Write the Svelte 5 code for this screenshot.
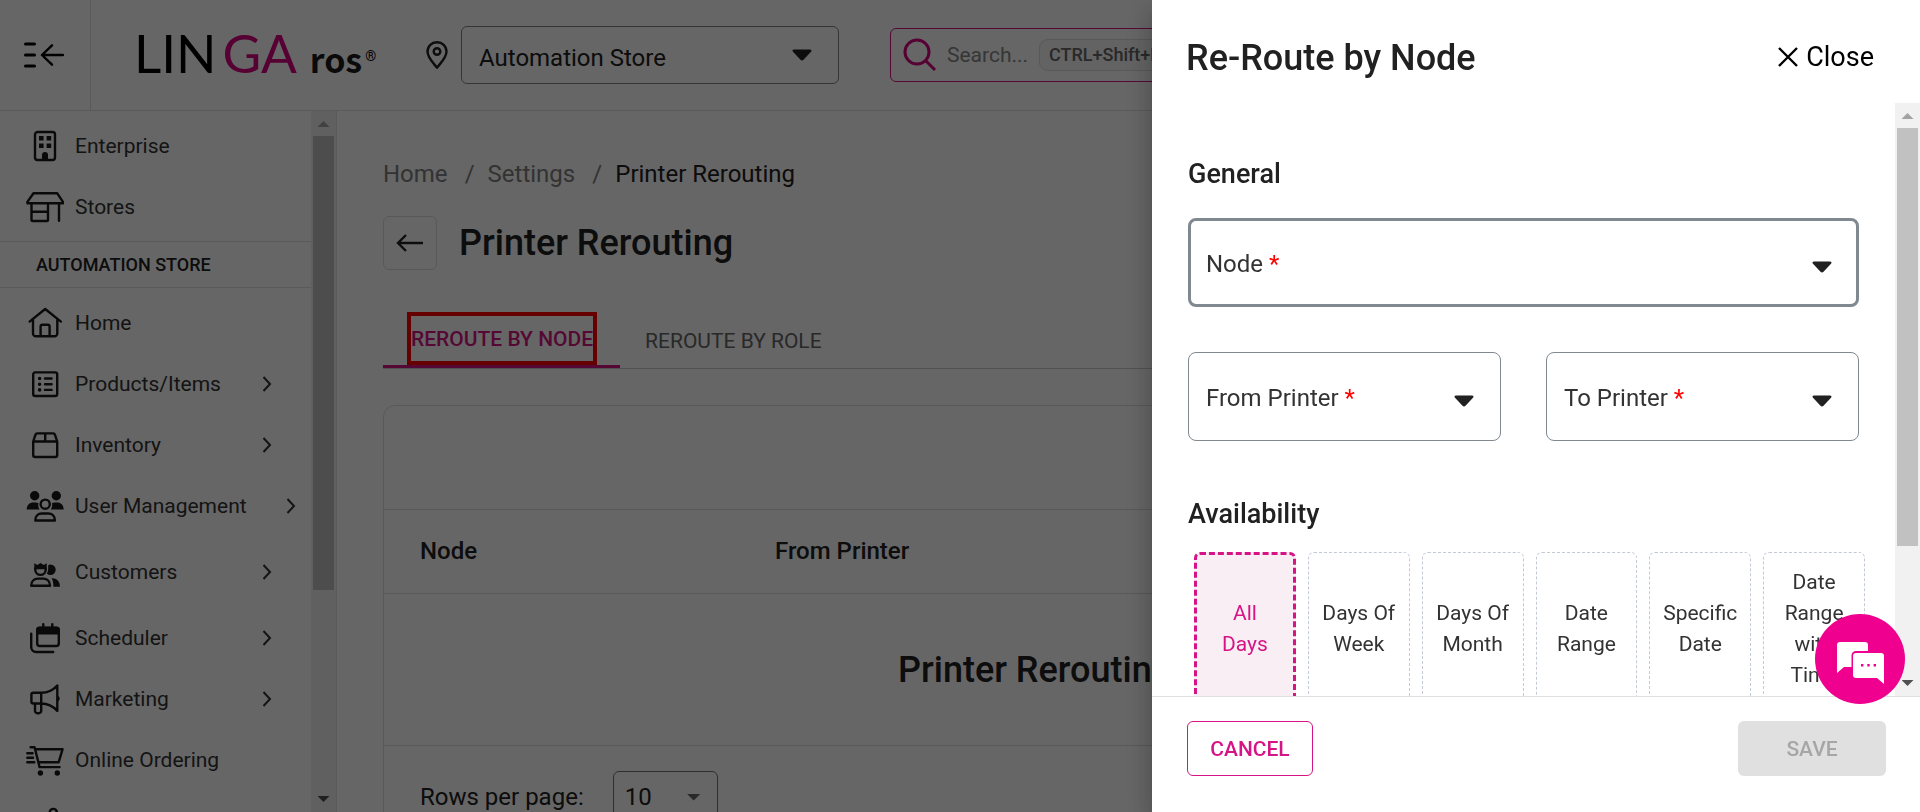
<script>
  const topItems = [
    { icon: 'enterprise', label: 'Enterprise' },
    { icon: 'stores', label: 'Stores' }
  ];
  const storeItems = [
    { icon: 'home', label: 'Home' },
    { icon: 'products', label: 'Products/Items', more: true },
    { icon: 'inventory', label: 'Inventory', more: true },
    { icon: 'users', label: 'User Management', more: true },
    { icon: 'customers', label: 'Customers', more: true, tall: true },
    { icon: 'scheduler', label: 'Scheduler', more: true },
    { icon: 'marketing', label: 'Marketing', more: true },
    { icon: 'ordering', label: 'Online Ordering' },
    { icon: 'share', label: '' }
  ];
  const choices = ['All\nDays', 'Days Of\nWeek', 'Days Of\nMonth', 'Date\nRange', 'Specific\nDate', 'Date\nRange\nwith\nTime'];
  let chosen = $state(0);
</script>

{#snippet icon(name)}
  <svg class="nav-icon" viewBox="0 0 38 32" aria-hidden="true">
    {#if name === 'enterprise'}
      <rect x="9" y="2" width="20" height="28" rx="2.5" />
      <path class="solid" d="M13 6h4.6v4.4H13zM20.6 6h4.6v4.4h-4.6zM13 13.6h4.6V18H13zM20.6 13.6h4.6V18h-4.6zM16 30v-5a3 3 0 0 1 6 0v5z" />
    {:else if name === 'stores'}
      <path d="M7.5 2.3h23.8l5.6 8.6v1.4H1.4v-1.4zM5.5 12.3V29a1 1 0 0 0 1 1H21a1 1 0 0 0 1-1V12.3M5.5 20.7H22M33 12.3v17.5" />
    {:else if name === 'home'}
      <path d="M3.6 14.6 19.2 2l15.7 12.6M7 12.5v14a2.8 2.8 0 0 0 2.8 2.8h18.7a2.8 2.8 0 0 0 2.8-2.8v-14M14.6 29V19.5a1.8 1.8 0 0 1 1.8-1.8h5.4a1.8 1.8 0 0 1 1.8 1.8V29" />
    {:else if name === 'products'}
      <rect x="7.2" y="4.4" width="24" height="23.6" rx="2" />
      <path d="M19 10.5h6.6M19 16.2h6.6M19 21.9h6.6" />
      <path class="solid" d="M15.4 10.5a1.8 1.8 0 1 1-3.6 0 1.8 1.8 0 0 1 3.6 0M15.4 16.2a1.8 1.8 0 1 1-3.6 0 1.8 1.8 0 0 1 3.6 0M15.4 21.9a1.8 1.8 0 1 1-3.6 0 1.8 1.8 0 0 1 3.6 0" />
    {:else if name === 'inventory'}
      <path d="M7.2 12.5 9.4 5.8a2 2 0 0 1 1.9-1.4h15.8A2 2 0 0 1 29 5.8l2.2 6.7V26a2 2 0 0 1-2 2h-20a2 2 0 0 1-2-2zM7.2 12.5h24M19.2 4.4v8" />
    {:else if name === 'users'}
      <circle class="solid" cx="8.7" cy="5.8" r="4.7" />
      <circle class="solid" cx="30.3" cy="5.8" r="4.7" />
      <path class="solid" d="M.7 19.4c0-4.5 3-7 6.6-7h2.4c1 0 1.9.2 2.7.6-.5 2.3 0 4.6 1.200 6.400zM37.700 19.400c0-4.500-3-7-6.600-7h-2.400c-1 0-1.900.200-2.700.600.5 2.300 0 4.600-1.200 6.400z" />
      <circle cx="19.2" cy="14.2" r="4.6" />
      <path d="M9.3 30.5c0-4.2 2.8-7 6.5-7h6.6c3.7 0 6.5 2.8 6.5 7z" />
    {:else if name === 'customers'}
      <circle class="solid" cx="24.5" cy="13.7" r="5.2" />
      <path class="solid" d="M25.5 22.2c4.8-.5 8.5 3 8.5 8.5h-6.6c0-3.6-.4-6.2-1.9-8.5z" />
      <path class="gap" d="M8.3 7.3l3 1.7 3.2-1.9L17.7 9l3-1.7v6a6.2 6.2 0 0 1-12.4 0z" />
      <path class="solid" d="M8.3 7.3l3 1.7 3.2-1.9L17.7 9l3-1.7v6H8.3z" />
      <path d="M9.3 12.5v1.2a5.2 5.2 0 0 0 10.4 0v-1.2" />
      <path d="M5.2 29.8c0-4.3 2.9-7.2 6.7-7.2h5.4c3.8 0 6.7 2.9 6.7 7.2z" />
    {:else if name === 'scheduler'}
      <rect x="11.2" y="5.8" width="21.6" height="18.2" rx="2.5" />
      <path class="solid" d="M10.3 12.5V7.6a2.8 2.8 0 0 1 2.8-2.8h17.8a2.8 2.8 0 0 1 2.8 2.8v4.9z" />
      <path d="M17.3 2.3v3M26.3 2.3v3M5.2 11.6V25a5 5 0 0 0 5 5h17" />
    {:else if name === 'marketing'}
      <path d="M15.2 9.8H7.4a2 2 0 0 0-2 2v6.7a2 2 0 0 0 2 2h7.800zM15.200 9.800c6 0 12-2.800 16.100-7.300v25.400c-4.100-4.500-10.100-7.400-16.100-7.400M9 20.500v7.400a2.300 2.300 0 0 0 2.300 2.300h1.600a2.300 2.300 0 0 0 2.300-2.300v-7.400" />
      <path class="solid" d="M31.5 12.7a3 3 0 0 1 0 5.8z" />
    {:else if name === 'ordering'}
      <path d="M4.6 3.3h4l5 19.8h20M9.7 5.2h26.9l-3.9 13H12.4M1.3 9.3h5.3M1.3 13.7H7M1.3 18.2h7" />
      <circle class="solid" cx="14.4" cy="29" r="2.7" />
      <circle class="solid" cx="31.3" cy="29" r="2.7" />
    {:else}
      <circle cx="27.3" cy="7.5" r="3.6" />
      <path d="M24 9.5 14 15" />
    {/if}
  </svg>
{/snippet}

{#snippet row(item)}
  <a class="nav-row" class:tall={item.tall} href="#menu" aria-label={item.label || 'More'}>
    {@render icon(item.icon)}
    <span class="nav-label">{item.label}</span>
    {#if item.more}
      <svg class="chevron" viewBox="0 0 10 16" aria-hidden="true"><path d="M1.5 1l6.500 7-6.500 7" /></svg>
    {/if}
  </a>
{/snippet}

{#snippet field(id, label, focused)}
  <div class="field" class:focused>
    <label for={id}>{label} <span class="required">*</span></label>
    <select {id} required><option value=""></option></select>
    <svg class="caret" viewBox="0 0 20 12" aria-hidden="true"><path d="M2 .5h16c1.500 0 2 1.300 1 2.300l-7.500 8c-.8.900-2.200.900-3 0L1 2.800C0 1.800.5.500 2 .500z" /></svg>
  </div>
{/snippet}

<div class="app">
  <header class="topbar">
    <button class="toggle" aria-label="Collapse menu">
      <svg viewBox="0 0 40 28" aria-hidden="true">
        <path class="bars" d="M1.5 3h9M1.5 14h9M1.5 25h9" />
        <path d="M39 14H18M28 4.3 18 14l10 9.7" />
      </svg>
    </button>
    <div class="logo">
      <span class="lin">LIN</span><span class="ga">GA</span><span class="ros">ros</span><sup>®</sup>
    </div>
    <svg class="pin" viewBox="0 0 22 28" aria-hidden="true">
      <path d="M11 1.2a9.4 9.4 0 0 0-9.5 9.4C1.5 17 7.5 22 11 26.6 14.5 22 20.5 17 20.5 10.6A9.4 9.4 0 0 0 11 1.2z" />
      <circle cx="11" cy="10.5" r="3.3" />
    </svg>
    <div class="store">
      <select aria-label="Store"><option>Automation Store</option></select>
      <svg class="caret" viewBox="0 0 20 12" aria-hidden="true"><path d="M2 .5h16c1.500 0 2 1.300 1 2.300l-7.500 8c-.8.900-2.200.900-3 0L1 2.800C0 1.800.5.500 2 .500z" /></svg>
    </div>
    <div class="search">
      <svg viewBox="0 0 34 34" aria-hidden="true"><circle cx="14" cy="14" r="12" /><path d="M22.5 22.5 32 32" /></svg>
      <input type="text" aria-label="Search" placeholder="Search..." />
      <kbd>CTRL+Shift+F</kbd>
    </div>
  </header>

  <div class="columns">
    <aside>
      <nav>
        {#each topItems as item}{@render row(item)}{/each}
        <h2 class="section">AUTOMATION STORE</h2>
        {#each storeItems as item}{@render row(item)}{/each}
      </nav>
      <div class="scrollbar" aria-hidden="true">
        <span class="arrow up"></span>
        <span class="thumb"></span>
        <span class="arrow down"></span>
      </div>
    </aside>

    <main>
      <div class="crumbs">
        <a href="#home">Home</a><span>/</span><a href="#settings">Settings</a><span>/</span><strong>Printer Rerouting</strong>
      </div>
      <div class="heading">
        <button class="back" aria-label="Back">
          <svg viewBox="0 0 28 18" aria-hidden="true"><path d="M27 9H2.5M10 1 2 9l8 8" /></svg>
        </button>
        <h1>Printer Rerouting</h1>
      </div>
      <div class="tabs" role="tablist">
        <button class="tab active" role="tab" aria-selected="true"><span>REROUTE BY NODE</span></button>
        <button class="tab" role="tab" aria-selected="false">REROUTE BY ROLE</button>
      </div>
      <section class="panel">
        <div class="toolbar"></div>
        <table>
          <colgroup><col class="node-col" /><col /></colgroup>
          <thead><tr><th>Node</th><th>From Printer</th></tr></thead>
          <tbody><tr><td colspan="2">Printer Rerouting</td></tr></tbody>
        </table>
        <div class="pager">
          <label for="rows">Rows per page:</label>
          <div class="rows">
            <select id="rows"><option>10</option></select>
            <span class="small-caret"></span>
          </div>
        </div>
      </section>
    </main>
  </div>
</div>

<div class="backdrop"></div>

<div class="drawer" role="dialog" aria-label="Re-Route by Node">
  <div class="drawer-head">
    <h2>Re-Route by Node</h2>
    <button class="close">
      <svg viewBox="0 0 20 20" aria-hidden="true"><path d="M1 1l18 18M19 1 1 19" /></svg>Close
    </button>
  </div>
  <div class="drawer-body">
    <form class="content">
      <h3>General</h3>
      <div class="fields">
        {@render field('node', 'Node', true)}
        {@render field('from', 'From Printer', false)}
        {@render field('to', 'To Printer', false)}
      </div>
      <h3 class="later">Availability</h3>
      <div class="choices">
        {#each choices as choice, i}
          <button type="button" class:chosen={chosen === i} aria-pressed={chosen === i} onclick={() => (chosen = i)}>{choice}</button>
        {/each}
      </div>
    </form>
    <div class="scrollbar" aria-hidden="true">
      <span class="arrow up"></span>
      <span class="thumb"></span>
      <span class="arrow down"></span>
    </div>
  </div>
  <div class="drawer-foot">
    <button class="cancel">CANCEL</button>
    <button class="save" disabled>SAVE</button>
  </div>
</div>

<button class="chat" aria-label="Chat">
  <svg viewBox="0 0 48 42" aria-hidden="true">
    <path class="bubble" d="M3 0h25a3 3 0 0 1 3 3v6H19a4.5 4.5 0 0 0-4.5 4.5V25H7l-7 6V3a3 3 0 0 1 3-3z" />
    <path class="bubble" d="M19 11h25a3 3 0 0 1 3 3v28l-7-6H19a3 3 0 0 1-3-3V14a3 3 0 0 1 3-3z" />
    <path class="dots" d="M24 22h2.4v2.4H24zM30.3 22h2.4v2.4h-2.400zM36.600 22H39v2.400h-2.400z" />
  </svg>
</button>

<style>
  :global(body) {
    overflow: hidden;
    background: #fff;
    color: #212121;
    font-family: Roboto, sans-serif;
    font-size: 21px;
  }
  * { box-sizing: border-box; }
  button, input, select { margin: 0; padding: 0; border: 0; background: none; color: inherit; font: inherit; }
  select { appearance: none; outline: none; }
  h1, h2, h3 { margin: 0; font-weight: 500; }
  a { color: inherit; text-decoration: none; }
  svg { flex: none; fill: none; stroke: currentColor; }

  .app { display: flex; flex-direction: column; height: 100vh; overflow: hidden; }
  .topbar { display: flex; align-items: center; flex: none; height: 111px; border-bottom: 1px solid #e0e0e0; }
  .toggle { align-self: stretch; width: 91px; padding-left: 24px; border-right: 1px solid #e0e0e0; text-align: left; }
  .toggle svg { display: block; width: 40px; height: 28px; stroke: #000; stroke-width: 2.4; stroke-linecap: round; stroke-linejoin: round; }
  .toggle .bars { stroke-width: 3; }
  .logo { display: flex; align-items: baseline; width: 335px; padding: 2px 0 0 43px; color: #000; font: 53px/60px Lato, sans-serif; }
  .ga { margin-left: 6px; color: #d6007f; }
  .ros { margin-left: 13px; color: #1a1a1a; font: 700 34px/60px "Noto Sans CJK SC", sans-serif; }
  .logo sup { align-self: center; margin-left: 3px; font: 14px/16px Roboto, sans-serif; }
  .pin { width: 22px; height: 28px; stroke-width: 2.4; }
  .store { display: grid; align-items: center; width: 378px; height: 58px; margin-left: 13px; border: 1px solid #808890; border-radius: 6px; font-size: 24px; }
  .store > * { grid-area: 1 / 1; }
  .store select { height: 56px; padding: 6px 0 0 17px; }
  .caret { width: 20px; height: 12px; justify-self: end; margin-right: 26px; fill: #212121; stroke: none; pointer-events: none; }
  .search { display: flex; align-items: center; flex: 1; height: 54px; margin: 0 46px 0 51px; padding: 0 12px; border: 1px solid #d61485; border-radius: 6px; }
  .search svg { width: 34px; height: 34px; stroke: #d6007f; stroke-width: 3; }
  .search input { width: 82px; margin: 0 10px 0 10px; outline: none; }
  .search input::placeholder { color: #888; opacity: 1; }
  kbd { padding: 4px 9px; border: 1px solid #ddd; border-radius: 9px; background: #f8f8f8; color: #666; font: 500 18px/22px Roboto, sans-serif; }

  .columns { display: flex; flex: 1; min-height: 0; }
  aside { display: flex; flex: none; width: 337px; border-right: 1px solid #e0e0e0; }
  nav { flex: 1; min-width: 0; overflow: hidden; padding-top: 4px; }
  .nav-row { display: flex; align-items: center; height: 61px; padding-left: 26px; color: #333; }
  .nav-row.tall { height: 71px; }
  .nav-icon { width: 38px; height: 32px; margin-right: 11px; color: #1a1a1a; stroke-width: 2.4; stroke-linecap: round; stroke-linejoin: round; }
  .solid { fill: currentColor; stroke: none; }
  .gap { fill: #fff; stroke: #fff; stroke-width: 3; }
  .nav-label { min-width: 148px; margin-right: 39px; white-space: nowrap; }
  .chevron { width: 10px; height: 16px; stroke-width: 2; }
  .section { margin: 4px 0; padding: 1px 0 0 36px; border: 1px solid #e0e0e0; border-width: 1px 0; font-size: 18px; line-height: 44px; font-weight: 500; }

  .scrollbar { display: flex; flex: none; flex-direction: column; align-items: center; width: 25px; background: #f1f1f1; }
  .arrow { flex: none; width: 12px; height: 6px; margin: 10px 0 9px; background: #a3a3a3; clip-path: polygon(50% 0, 100% 100%, 0 100%); }
  .arrow.down { margin: auto 0 10px; background: #505050; clip-path: polygon(0 0, 100% 0, 50% 100%); }
  .thumb { width: 21px; height: 454px; background: #c1c1c1; }

  main { flex: 1; min-width: 0; overflow: hidden; padding: 47px 46px 0; }
  .crumbs { display: flex; color: #808080; font-size: 24px; line-height: 32px; }
  .crumbs span { width: 40px; padding-left: 4px; text-align: center; }
  .crumbs strong { color: #212121; font-weight: 400; }
  .heading { display: flex; align-items: center; margin-top: 26px; }
  .back { display: grid; place-items: center; width: 54px; height: 54px; border: 1px solid #ddd; border-radius: 6px; }
  .back svg { width: 28px; height: 18px; stroke-width: 2.4; }
  h1 { margin-left: 22px; font-size: 36px; line-height: 48px; }
  .tabs { display: flex; margin-top: 42px; border-bottom: 1px solid #ccc; }
  .tab { height: 56px; padding: 1px 25px 0; color: #666; }
  .tab.active { padding: 0 23px 0 24px; border-bottom: 3px solid #d61485; color: #d61485; font-weight: 500; }
  .tab.active span { display: block; height: 53px; border: 4px solid #f00; line-height: 47px; }
  .panel { margin-top: 36px; border: 1px solid #ddd; border-radius: 12px; }
  .toolbar { height: 103px; }
  table { width: 100%; border-collapse: collapse; table-layout: fixed; }
  .node-col { width: 355px; }
  th { height: 84px; padding: 0 36px 2px; border: 1px solid #ddd; border-width: 1px 0; font-size: 24px; font-weight: 500; text-align: left; }
  td { height: 152px; padding: 0 0 0 514px; border-bottom: 1px solid #ddd; font-size: 36px; font-weight: 500; }
  .pager { display: flex; align-items: center; padding: 25px 36px; font-size: 24px; }
  .rows { display: grid; align-items: center; width: 105px; height: 52px; margin-left: 29px; border: 1px solid #777; border-radius: 6px; }
  .rows > * { grid-area: 1 / 1; }
  .rows select { height: 50px; padding-left: 11px; }
  .small-caret { justify-self: end; width: 14px; height: 7px; margin-right: 16px; background: #666; clip-path: polygon(0 0, 100% 0, 50% 100%); }

  .backdrop { position: fixed; inset: 0; background: rgba(0, 0, 0, .6); }
  .drawer { position: fixed; inset: 0 0 0 auto; display: flex; flex-direction: column; width: 40%; background: #fff; box-shadow: 0 8px 10px -5px rgba(0, 0, 0, .2), 0 16px 24px 2px rgba(0, 0, 0, .14), 0 6px 30px 5px rgba(0, 0, 0, .12); }
  .drawer-head { display: flex; align-items: center; justify-content: space-between; height: 103px; padding: 12px 46px 0 34px; }
  .drawer-head h2 { font-size: 36px; line-height: 48px; }
  .close { display: flex; align-items: center; gap: 8px; padding-bottom: 1px; color: #000; font-size: 27px; }
  .close svg { width: 20px; height: 20px; stroke-width: 2.4; }
  .drawer-body { display: flex; flex: 1; min-height: 0; overflow: hidden; }
  .content { flex: 1; min-width: 0; padding: 53px 36px 0; }
  h3 { font-size: 27px; line-height: 36px; }
  .later { margin-top: 55px; }
  .fields { display: grid; grid-template-columns: 1fr 1fr; gap: 45px; margin-top: 26px; font-size: 24px; }
  .field { display: grid; align-items: center; height: 89px; border: 1px solid #808890; border-radius: 8px; padding: 2px; color: #333; }
  .field.focused { grid-column: 1 / -1; padding: 0; border-width: 3px; }
  .field > * { grid-area: 1 / 1; }
  .field label { padding: 2px 0 0 15px; pointer-events: none; }
  .field select { height: 83px; }
  .field .caret { margin: 8px 24px 0 0; }
  .required { color: #f00; }
  .choices { display: grid; grid-template-columns: repeat(6, 1fr); gap: 12px; margin: 20px -6px 0 6px; }
  .choices button { height: 153px; border: 1px dashed #c3cad4; border-radius: 6px; color: #333; line-height: 31px; white-space: pre-line; }
  .choices .chosen { border: 3px dashed #d61485; background: #faeef5; color: #d61485; }
  .drawer-foot { display: flex; justify-content: space-between; padding: 24px 34px 36px 35px; border-top: 1px solid #e0e0e0; }
  .drawer-foot button { height: 55px; border-radius: 6px; font-weight: 500; }
  .cancel { width: 126px; border: 1px solid #d61485; color: #d61485; }
  .save { width: 148px; background: #e0e0e0; color: #a6a6a6; }
  .drawer .thumb { height: 418px; }
  .chat { position: fixed; right: 15px; bottom: 108px; display: grid; place-items: center; width: 90px; height: 90px; border-radius: 50%; background: #f0008f; }
  .chat svg { width: 48px; height: 42px; margin: 8px 0 0 2px; }
  .bubble { fill: #fff; stroke: none; }
  .dots { fill: #f0008f; stroke: none; }
</style>
